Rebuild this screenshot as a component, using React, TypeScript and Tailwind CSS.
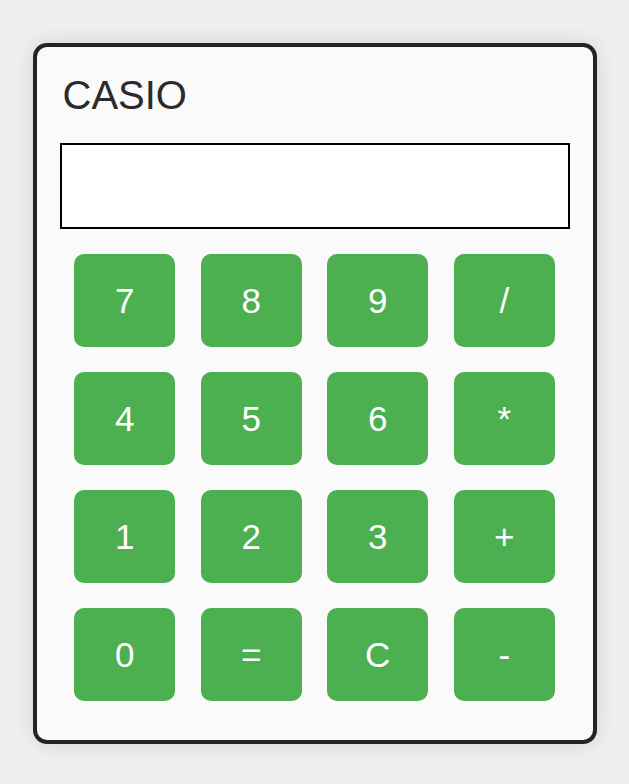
const KEYS = ["7", "8", "9", "/", "4", "5", "6", "*", "1", "2", "3", "+", "0", "=", "C", "-"];

export default function App() {
  return (
    <div className="min-h-screen bg-[#efefef] flex justify-center pt-[43px] font-['Liberation_Sans',Arial,sans-serif]">
      <div className="w-[564px] h-[701px] border-4 border-[#1f252b] rounded-[14px] bg-[#fafafa] shadow-[0_0_20px_rgba(0,0,0,0.12)]">
        <div className="pl-[26px] pt-[25px] text-[40px] leading-[46px] text-[#2b2b2b]">CASIO</div>
        <div className="mx-[23px] mt-[25px] h-[86px] border-2 border-black bg-white" />
        <div className="mt-[25px] grid grid-cols-[repeat(4,101px)] gap-x-[25.5px] gap-y-[25px] justify-center">
          {KEYS.map((k) => (
            <button
              key={k}
              className="h-[93px] rounded-[10px] bg-[#4caf50] text-white text-[35px] leading-none flex items-center justify-center"
            >
              {k}
            </button>
          ))}
        </div>
      </div>
    </div>
  );
}
